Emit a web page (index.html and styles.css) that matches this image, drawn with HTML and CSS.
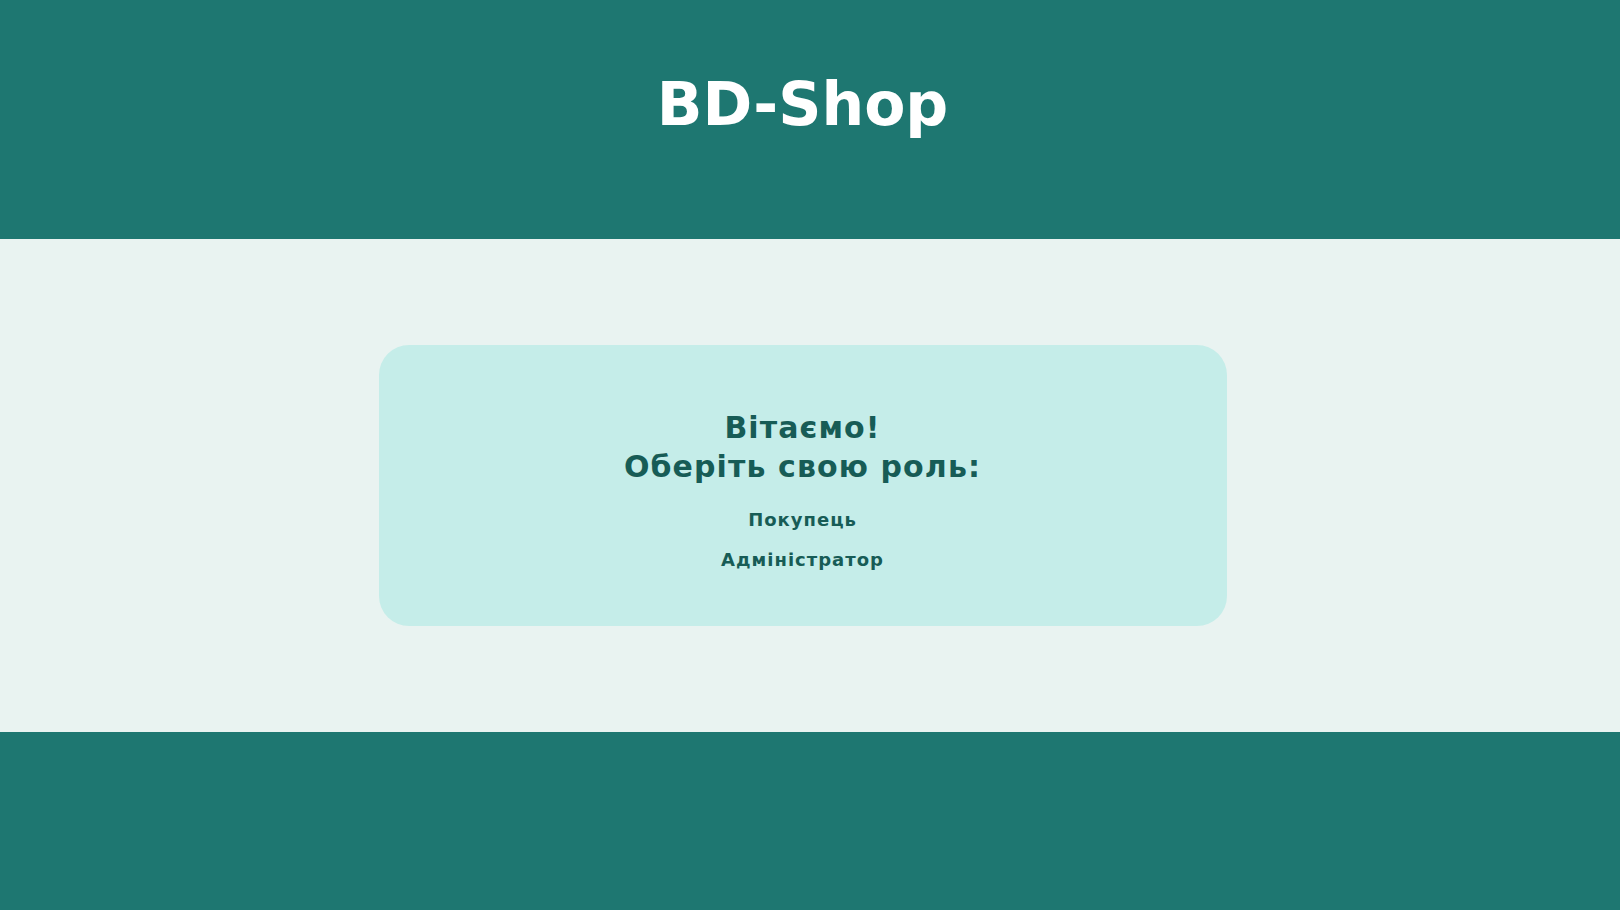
FILE: index.html
```html
<!DOCTYPE html>
<html lang="uk">
<head>
<meta charset="utf-8">
<title>BD-Shop</title>
<link rel="stylesheet" href="styles.css">
</head>
<body>
<header class="site-header">
  <h1 class="site-title">BD-Shop</h1>
</header>
<main class="site-main">
  <section class="role-card">
    <h2 class="role-heading">Вітаємо!<br>Оберіть свою роль:</h2>
    <nav class="role-links">
      <a class="role-link" href="#">Покупець</a>
      <a class="role-link" href="#">Адміністратор</a>
    </nav>
  </section>
</main>
<footer class="site-footer"></footer>
</body>
</html>
```

FILE: styles.css
```css
html, body {
  margin: 0;
  padding: 0;
}
body {
  font-family: "DejaVu Sans", Verdana, sans-serif;
  background: #1e7771;
}
.site-header {
  height: 239px;
  box-sizing: border-box;
  padding: 70px 15px 0 0;
  background: #1e7771;
}
.site-title {
  margin: 0;
  text-align: center;
  color: #ffffff;
  font-size: 60px;
  font-weight: bold;
  line-height: 1.164;
}
.site-main {
  height: 493px;
  background: #e9f3f1;
  display: flex;
  align-items: center;
  justify-content: center;
  padding-right: 15px;
}
.role-card {
  width: 848px;
  height: 281px;
  box-sizing: border-box;
  padding-top: 63px;
  background: #c5ede9;
  border-radius: 30px;
  text-align: center;
  color: #175c56;
}
.role-heading {
  margin: 0;
  font-size: 30px;
  line-height: 39px;
  font-weight: bold;
  letter-spacing: 1.1px;
}
.role-links {
  margin-top: 14px;
  display: flex;
  flex-direction: column;
  align-items: center;
}
.role-link {
  display: block;
  font-size: 18px;
  line-height: 40px;
  font-weight: bold;
  letter-spacing: 1px;
  color: #175c56;
  text-decoration: none;
}
.site-footer {
  height: 178px;
  background: #1e7771;
}
```
